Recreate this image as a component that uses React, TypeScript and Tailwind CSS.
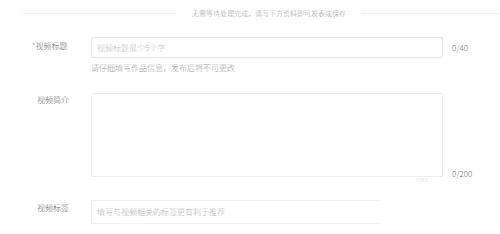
import React from "react";

const font = { fontFamily: '"Noto Sans CJK SC", "Liberation Sans", sans-serif' };

export default function App() {
  return (
    <div
      className="w-[500px] h-[234px] bg-white text-[#666] overflow-hidden relative font-light"
      style={font}
    >
      {/* divider with notice */}
      <div className="flex items-center pl-[22px] pt-[8px] h-[18px]">
        <div className="w-[155px] h-px bg-[#f0f0f0]" />
        <div className="px-[15px] text-[7px] text-[#a0a0a0] whitespace-nowrap leading-none">
          无需等待处理完成，请写下方资料即可发表或保存
        </div>
        <div className="flex-1 h-px bg-[#f0f0f0]" />
      </div>

      {/* title */}
      <div className="flex mt-[19px]">
        <div className="w-[91px] pl-[32px] pt-[3px] text-[8px] text-[#666] leading-[12px]">
          <span className="text-[#f26b4f]">*</span>视频标题
        </div>
        <div className="flex flex-col">
          <div className="flex items-center">
            <div className="w-[352px] h-[21px] border border-[#e8e8e8] rounded-[2px] flex items-center pl-[5px] text-[8px] text-[#c0c0c0]">
              视频标题最少5个字
            </div>
            <div className="ml-[9px] text-[8px] text-[#777]">0/40</div>
          </div>
          <div className="mt-[5px] text-[8px] text-[#999] leading-[10px]">
            请仔细填写作品信息，发布后将不可更改
          </div>
        </div>
      </div>

      {/* description */}
      <div className="flex mt-[20px]">
        <div className="w-[91px] pl-[37px] pt-[1px] text-[8px] text-[#666] leading-[12px]">
          视频简介
        </div>
        <div className="flex items-end">
          <div className="w-[352px] h-[84px] border border-[#ededed] rounded-[2px]" />
          <div className="ml-[9px] mb-[-3px] text-[8px] text-[#777] leading-[12px]">0/200</div>
        </div>
      </div>
      <div className="ml-[416px] h-[6px] text-[4px] text-[#ddd] leading-[6px]">已添加</div>

      {/* tags */}
      <div className="flex mt-[17px]">
        <div className="w-[91px] pl-[37px] pt-[2px] text-[8px] text-[#666] leading-[12px]">
          视频标签
        </div>
        <div className="w-[289px] h-[24px] border border-[#f0f0f0] border-r-0 rounded-l-[2px] flex items-center pl-[5px] text-[8px] text-[#b0b0b0]">
          填写与视频相关的标签更有利于推荐
        </div>
      </div>
    </div>
  );
}
